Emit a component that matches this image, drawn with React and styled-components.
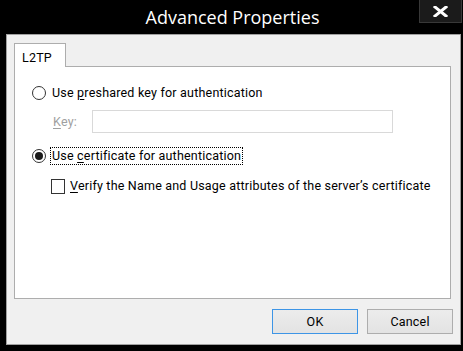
import React from "react";
import styled, { createGlobalStyle } from "styled-components";

const Global = createGlobalStyle`
  html, body { margin: 0; padding: 0; background: #000; }
  body { font-family: Roboto, "Liberation Sans", sans-serif; }
`;

const Window = styled.div`
  width: 463px;
  height: 351px;
  background: #000;
  display: flex;
  flex-direction: column;
  box-sizing: border-box;
`;

const TitleBar = styled.div`
  height: 34px;
  display: grid;
  grid-template-columns: 1fr auto 1fr;
  align-items: start;
`;

const Title = styled.div`
  grid-column: 2;
  color: #fff;
  font-family: "Open Sans", Roboto, sans-serif;
  font-size: 18px;
  line-height: 20px;
  padding-top: 7px;
  padding-left: 2px;
`;

const CloseButton = styled.div`
  grid-column: 3;
  justify-self: end;
  margin-right: 1px;
  width: 43px;
  height: 23px;
  box-sizing: border-box;
  border: 1px solid #383838;
  border-top: none;
  background: #1b1b1b;
  display: flex;
  align-items: center;
  justify-content: center;
`;

const Client = styled.div`
  margin: 0 2px 6px 6px;
  flex: 1;
  background: #f0f0f0;
  border: 1px solid #a0a0a0;
  display: flex;
  flex-direction: column;
  padding: 8px 9px 0 7px;
`;

const TabStrip = styled.div`
  display: flex;
  position: relative;
  z-index: 1;
  margin-bottom: -1px;
`;

const Tab = styled.div`
  width: 52px;
  height: 24px;
  box-sizing: border-box;
  background: #fff;
  border: 1px solid #adadad;
  border-bottom: none;
  font-size: 12.5px;
  letter-spacing: 0.2px;
  padding: 6px 0 0 7px;
  color: #000;
`;

const Panel = styled.div`
  height: 233px;
  box-sizing: border-box;
  background: #fff;
  border: 1px solid #adadad;
  padding: 17px 0 0 17px;
  display: flex;
  flex-direction: column;
  font-size: 12.5px;
  letter-spacing: 0.2px;
  color: #000;
`;

const OptionRow = styled.div`
  display: flex;
  align-items: center;
  height: 18px;
  margin-top: ${(p) => p.$top || 0}px;
  margin-left: ${(p) => p.$indent || 0}px;
`;

const RadioCircle = styled.div`
  width: 14px;
  height: 14px;
  box-sizing: border-box;
  border-radius: 50%;
  border: 1px solid #333;
  background: #fff;
  display: flex;
  align-items: center;
  justify-content: center;
  margin-right: 4px;
  &::after {
    content: "";
    display: ${(p) => (p.$checked ? "block" : "none")};
    width: 8px;
    height: 8px;
    border-radius: 50%;
    background: #1a1a1a;
  }
`;

const CheckBox = styled.div`
  width: 14px;
  height: 15px;
  box-sizing: border-box;
  border: 1px solid #333;
  background: #fff;
  margin-right: 3px;
`;

const Label = styled.span`
  white-space: nowrap;
  color: #000;
  border: 1px dotted ${(p) => (p.$focused ? "#000" : "transparent")};
  padding: 0 1px;
  line-height: 16px;
`;

const KeyRow = styled.div`
  display: flex;
  align-items: center;
  margin: 8px 0 0 21px;
`;

const KeyLabel = styled.span`
  color: #a0a0a0;
  width: 39px;
  white-space: nowrap;
`;

const KeyInput = styled.div`
  width: 301px;
  height: 23px;
  box-sizing: border-box;
  border: 1px solid #d9d9d9;
  background: #fff;
`;

const ButtonRow = styled.div`
  display: flex;
  justify-content: flex-end;
  gap: 9px;
  margin-top: 10px;
  margin-right: -2px;
`;

const Button = styled.div`
  width: 86px;
  height: 25px;
  box-sizing: border-box;
  border: 1px solid ${(p) => (p.$default ? "#3d95e6" : "#adadad")};
  background: linear-gradient(#ececec, #e3e3e3);
  display: flex;
  align-items: center;
  justify-content: center;
  font-size: 12.5px;
  letter-spacing: 0.2px;
  color: #000;
`;

const U = styled.span`
  text-decoration: underline;
  text-underline-offset: 2px;
`;

export default function App() {
  return (
    <>
      <Global />
      <Window>
        <TitleBar>
          <Title>Advanced Properties</Title>
          <CloseButton>
            <svg width="15" height="11" viewBox="0 0 15 11">
              <path d="M2 1 L13 10 M13 1 L2 10" stroke="#fff" strokeWidth="3" strokeLinecap="square" />
            </svg>
          </CloseButton>
        </TitleBar>
        <Client>
          <TabStrip>
            <Tab>L2TP</Tab>
          </TabStrip>
          <Panel>
            <OptionRow>
              <RadioCircle />
              <Label>
                Use <U>p</U>reshared key for authentication
              </Label>
            </OptionRow>
            <KeyRow>
              <KeyLabel>
                <U>K</U>ey:
              </KeyLabel>
              <KeyInput />
            </KeyRow>
            <OptionRow $top={14}>
              <RadioCircle $checked />
              <Label $focused>
                Use <U>c</U>ertificate for authentication
              </Label>
            </OptionRow>
            <OptionRow $top={12} $indent={19}>
              <CheckBox />
              <Label>
                <U>V</U>erify the Name and Usage attributes of the server’s certificate
              </Label>
            </OptionRow>
          </Panel>
          <ButtonRow>
            <Button $default>OK</Button>
            <Button>Cancel</Button>
          </ButtonRow>
        </Client>
      </Window>
    </>
  );
}
